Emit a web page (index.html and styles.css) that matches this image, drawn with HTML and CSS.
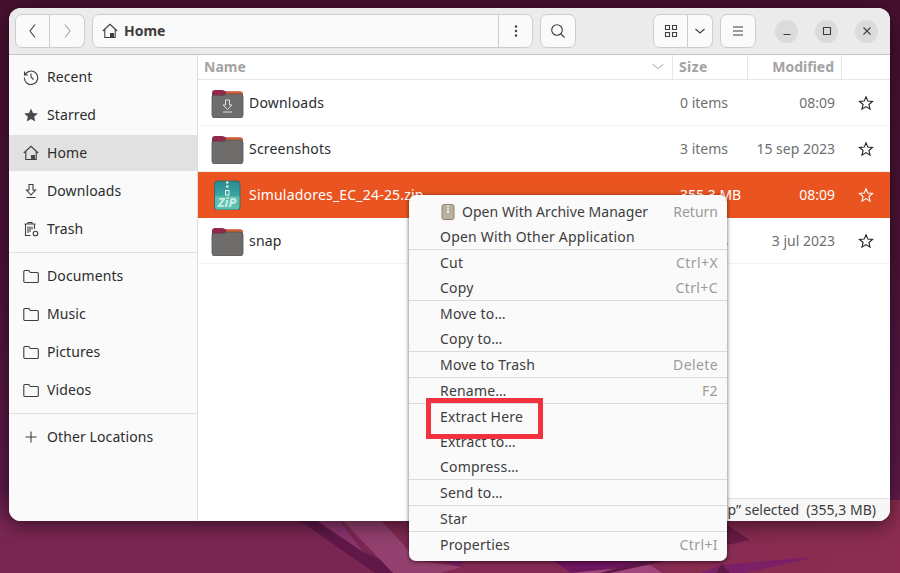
FILE: index.html
```html
<!DOCTYPE html>
<html lang="en">
<head>
<meta charset="utf-8">
<title>Home</title>
<link rel="stylesheet" href="styles.css">
</head>
<body>
<div class="desktop">
  <svg class="wallpaper" viewBox="0 0 900 573" preserveAspectRatio="none" aria-hidden="true">
    <defs>
      <linearGradient id="bg" x1="0" y1="0" x2="0" y2="1">
        <stop offset="0" stop-color="#47102f"/>
        <stop offset=".45" stop-color="#4d1339"/>
        <stop offset=".85" stop-color="#5e1a48"/>
        <stop offset=".92" stop-color="#7a2652"/>
        <stop offset="1" stop-color="#7a2652"/>
      </linearGradient>
      <linearGradient id="low" x1="0" y1="0" x2="1" y2="0">
        <stop offset="0" stop-color="#7f2753"/>
        <stop offset="1" stop-color="#8c2d50"/>
      </linearGradient>
    </defs>
    <rect width="900" height="573" fill="url(#bg)"/>
    <polygon points="298,500 900,500 900,573 410,573" fill="url(#low)"/>
    <polygon points="300,521 316,521 363,552 412,573 375,573" fill="#5f1848"/>
    <polygon points="318,521 340,521 363,552" fill="#8c3470"/>
    <polygon points="343,521 382,521 408,550 430,573 393,573" fill="#94406f"/>
    <polygon points="420,561 462,567 440,573 420,573" fill="#94406f"/>
    <polygon points="440,561 462,561 462,567" fill="#7a1f62"/>
    <polygon points="553,561 640,561 600,573 572,573" fill="#6e1560"/>
    <polygon points="570,573 650,565 662,573" fill="#a0467c"/>
    <polygon points="640,561 665,561 610,573 600,573" fill="#5f1848"/>
    <polygon points="700,573 722,565 815,557 745,573" fill="#7a1f68"/>
    <polygon points="722,564 716,573 730,573" fill="#5f1848"/>
    <polygon points="727,525 750,540 727,545" fill="#6a1b45"/>
  </svg>

  <main class="window">
    <header class="headerbar">
      <div class="btn-group">
        <button class="btn btn-nav"><svg width="16" height="16" viewBox="0 0 16 16"><path d="M10 1.500 5 8l5 6.500" class="ln"/></svg></button>
        <button class="btn btn-nav off"><svg width="16" height="16" viewBox="0 0 16 16"><path d="m6 1.500 5 6.500-5 6.500" class="ln"/></svg></button>
      </div>
      <div class="pathbar">
        <div class="path-main">
          <svg width="16" height="16" viewBox="0 0 16 16"><path d="M.8 8 8 1.300 15.200 8M2.800 6.500V14.500H13.200V6.500" class="ln"/><path d="M8 10h4v4.500H8z" fill="#3d3d3d"/></svg>
          <span class="path-label">Home</span>
        </div>
        <button class="path-more"><svg width="16" height="16" viewBox="0 0 16 16"><circle cx="8" cy="3.500" r="1.200"/><circle cx="8" cy="8" r="1.200"/><circle cx="8" cy="12.500" r="1.200"/></svg></button>
      </div>
      <button class="btn btn-icon"><svg width="16" height="16" viewBox="0 0 16 16"><circle cx="7" cy="7" r="5.300" class="ln"/><path d="m11 11 3.500 3.500" class="ln"/></svg></button>
      <div class="spacer"></div>
      <div class="btn-group">
        <button class="btn btn-view"><svg width="14" height="14" viewBox="0 0 14 14"><path d="M1.500 1.500h4v4h-4zM8.500 1.500h4v4h-4zM1.500 8.500h4v4h-4zM8.500 8.500h4v4h-4z" class="ln"/></svg></button>
        <button class="btn btn-drop"><svg width="12" height="12" viewBox="0 0 12 12"><path d="m1.500 4 4.500 4 4.500-4" class="ln"/></svg></button>
      </div>
      <button class="btn btn-icon btn-menu"><svg width="14" height="14" viewBox="0 0 14 14"><path d="M2 3h10M2 7h10M2 11h10" class="ln"/></svg></button>
      <div class="winctl">
        <span class="wc"><svg width="10" height="10" viewBox="0 0 10 10"><path d="M1.500 8.500h7" class="ln"/></svg></span>
        <span class="wc"><svg width="10" height="10" viewBox="0 0 10 10"><path d="M1.500 1.500h7v7h-7z" class="ln"/></svg></span>
        <span class="wc"><svg width="10" height="10" viewBox="0 0 10 10"><path d="m1.500 1.500 7 7M8.500 1.500l-7 7" class="ln"/></svg></span>
      </div>
    </header>

    <div class="content">
      <nav class="sidebar">
        <div class="side-group">
          <a class="side-item"><svg width="16" height="16" viewBox="0 0 16 16"><path d="M1.500 2.500v3.500H5M1.900 6A6.700 6.700 0 1 1 1.300 8.500M8 4.500V8l2.500 2.500" class="ln"/></svg><span>Recent</span></a>
          <a class="side-item"><svg width="16" height="16" viewBox="0 0 16 16"><path d="m8 1.500 2 4.500 4.800.5-3.600 3.200 1 4.800L8 12.100l-4.200 2.400 1-4.800L1.200 6.500 6 6z" fill="#4a4a4a"/></svg><span>Starred</span></a>
          <a class="side-item active"><svg width="16" height="16" viewBox="0 0 16 16"><path d="M.8 8 8 1.300 15.200 8M2.800 6.500V14.500H13.200V6.500" class="ln"/><path d="M8 10h4v4.500H8z" fill="#4a4a4a"/></svg><span>Home</span></a>
          <a class="side-item"><svg width="16" height="16" viewBox="0 0 16 16"><path d="M6 1.500h4V7h2.500L8 12 3.500 7H6zM3.500 14.500h9" class="ln"/></svg><span>Downloads</span></a>
          <a class="side-item"><svg width="16" height="16" viewBox="0 0 16 16"><path d="M1.500 3h11M5 3V1.500h4V3M2.500 3v11.500h5M11.500 3v5M5 5.500V12M7 5.500V11M9 5.500v3" class="ln"/><circle cx="12.500" cy="12.500" r="2.300" class="ln"/></svg><span>Trash</span></a>
        </div>
        <div class="side-group">
          <a class="side-item"><svg width="16" height="16" viewBox="0 0 16 16"><path d="M.8 3.500a1 1 0 0 1 1-1h4l1.500 2h7a1 1 0 0 1 1 1v8a1 1 0 0 1-1 1h-12.500a1 1 0 0 1-1-1z" class="ln"/></svg><span>Documents</span></a>
          <a class="side-item"><svg width="16" height="16" viewBox="0 0 16 16"><path d="M.8 3.500a1 1 0 0 1 1-1h4l1.500 2h7a1 1 0 0 1 1 1v8a1 1 0 0 1-1 1h-12.500a1 1 0 0 1-1-1z" class="ln"/></svg><span>Music</span></a>
          <a class="side-item"><svg width="16" height="16" viewBox="0 0 16 16"><path d="M.8 3.500a1 1 0 0 1 1-1h4l1.500 2h7a1 1 0 0 1 1 1v8a1 1 0 0 1-1 1h-12.500a1 1 0 0 1-1-1z" class="ln"/></svg><span>Pictures</span></a>
          <a class="side-item"><svg width="16" height="16" viewBox="0 0 16 16"><path d="M.8 3.500a1 1 0 0 1 1-1h4l1.500 2h7a1 1 0 0 1 1 1v8a1 1 0 0 1-1 1h-12.500a1 1 0 0 1-1-1z" class="ln"/></svg><span>Videos</span></a>
        </div>
        <div class="side-group">
          <a class="side-item"><svg width="16" height="16" viewBox="0 0 16 16"><path d="M8 2.500v11M2.500 8h11" class="ln"/></svg><span>Other Locations</span></a>
        </div>
      </nav>

      <section class="files">
        <div class="colhead">
          <div class="col c-name"><span>Name</span><svg width="14" height="14" viewBox="0 0 14 14"><path d="m1.500 5 5.500 4.500L12.500 5" class="ln-soft"/></svg></div>
          <div class="col c-size">Size</div>
          <div class="col c-mod">Modified</div>
          <div class="col c-star"></div>
        </div>

        <div class="row">
          <div class="c-name cell">
            <svg class="ficon" width="33" height="30" viewBox="0 0 33 30"><use href="#folder"/><path d="M14.500 12h4v5h2.500l-4.500 4.500-4.500-4.500h2.500zM12 24h9" fill="none" stroke="#e2e2e2" stroke-width="1"/></svg>
            <span class="fname">Downloads</span>
          </div>
          <div class="c-size cell dim">0 items</div>
          <div class="c-mod cell dim">08:09</div>
          <div class="c-star cell"><svg width="16" height="16" viewBox="0 0 16 16"><use href="#star"/></svg></div>
        </div>
        <div class="row">
          <div class="c-name cell"><svg class="ficon" width="33" height="30" viewBox="0 0 33 30"><use href="#folder"/></svg><span class="fname">Screenshots</span></div>
          <div class="c-size cell dim">3 items</div>
          <div class="c-mod cell dim">15 sep 2023</div>
          <div class="c-star cell"><svg width="16" height="16" viewBox="0 0 16 16"><use href="#star"/></svg></div>
        </div>
        <div class="row selected">
          <div class="c-name cell">
            <svg class="ficon" width="33" height="30" viewBox="0 0 33 30">
              <defs><linearGradient id="zipg" x1="0" y1="0" x2="0" y2="1"><stop offset="0" stop-color="#2a8a90"/><stop offset=".5" stop-color="#3ba5a0"/><stop offset=".55" stop-color="#5cc0ae"/><stop offset="1" stop-color="#5cc0ae"/></linearGradient></defs>
              <rect x="3.500" y="1" width="25.500" height="29" rx="3" fill="url(#zipg)" stroke="#38686b"/>
              <path d="M15 1.500h2.500v2H15zM15 5.500h2.500v2H15z" fill="#e9f5f4"/>
              <rect x="14.500" y="10.500" width="3.500" height="4.500" fill="none" stroke="#e9f5f4"/>
              <text x="16" y="27" class="ziptext" text-anchor="middle">ZiP</text>
            </svg>
            <span class="fname">Simuladores_EC_24-25.zip</span>
          </div>
          <div class="c-size cell">355,3 MB</div>
          <div class="c-mod cell">08:09</div>
          <div class="c-star cell"><svg width="16" height="16" viewBox="0 0 16 16"><use href="#star-w"/></svg></div>
        </div>
        <div class="row">
          <div class="c-name cell"><svg class="ficon" width="33" height="30" viewBox="0 0 33 30"><use href="#folder"/></svg><span class="fname">snap</span></div>
          <div class="c-size cell dim">2 items</div>
          <div class="c-mod cell dim">3 jul 2023</div>
          <div class="c-star cell"><svg width="16" height="16" viewBox="0 0 16 16"><use href="#star"/></svg></div>
        </div>

        <div class="status">“Simuladores_EC_24-25.zip” selected&nbsp; (355,3 MB)</div>
      </section>
    </div>
  </main>

  <div class="menu">
    <div class="mi mi-tight"><svg class="mi-icon" width="16" height="16" viewBox="0 0 16 16"><rect x="2" y=".5" width="12" height="15" rx="2" fill="#b9b19d" stroke="#8d8675"/><path d="M7 1h2v1.500H7zM7 3.500h2V5H7zM7 6h2v3H7z" fill="#ece8dc"/></svg><span class="ml">Open With Archive Manager</span><span class="ms ms-plain">Return</span></div>
    <div class="mi"><span class="ml">Open With Other Application</span></div>
    <hr class="msep">
    <div class="mi"><span class="ml">Cut</span><span class="ms">Ctrl+X</span></div>
    <div class="mi"><span class="ml">Copy</span><span class="ms">Ctrl+C</span></div>
    <hr class="msep">
    <div class="mi"><span class="ml">Move to…</span></div>
    <div class="mi"><span class="ml">Copy to…</span></div>
    <hr class="msep">
    <div class="mi"><span class="ml">Move to Trash</span><span class="ms">Delete</span></div>
    <hr class="msep">
    <div class="mi"><span class="ml">Rename…</span><span class="ms">F2</span></div>
    <hr class="msep">
    <div class="mi"><span class="ml">Extract Here</span></div>
    <div class="mi"><span class="ml">Extract to…</span></div>
    <div class="mi"><span class="ml">Compress…</span></div>
    <hr class="msep">
    <div class="mi"><span class="ml">Send to…</span></div>
    <hr class="msep">
    <div class="mi"><span class="ml">Star</span></div>
    <hr class="msep">
    <div class="mi"><span class="ml">Properties</span><span class="ms">Ctrl+I</span></div>
  </div>

  <div class="highlight"></div>

  <svg class="defs" width="0" height="0" aria-hidden="true">
    <defs>
      <symbol id="folder" viewBox="0 0 33 30">
        <path d="M1 5a3 3 0 0 1 3-3h7c2 0 3 1.500 5 1.500h13a3 3 0 0 1 3 3V12H1z" fill="#8f2a4c"/>
        <path d="M16 3.500h13a3 3 0 0 1 3 2V8H14z" fill="#d9622c"/>
        <path d="M1 9c0-1 .8-1.500 2-1.500h9c2 0 2.500-1.500 5-1.500h12a3 3 0 0 1 3 3v18a3 3 0 0 1-3 3H4a3 3 0 0 1-3-3z" fill="#6f6c6c" stroke="#565454" stroke-width=".8"/>
      </symbol>
      <symbol id="star" viewBox="0 0 16 16"><path d="m8 1.800 1.800 4.300 4.700.4-3.600 3 1.100 4.600L8 11.600l-4 2.500 1.100-4.600-3.600-3 4.700-.4z" fill="none" stroke="#222" stroke-width="1.100"/></symbol>
      <symbol id="star-w" viewBox="0 0 16 16"><path d="m8 1.800 1.800 4.300 4.700.4-3.600 3 1.100 4.600L8 11.600l-4 2.500 1.100-4.600-3.600-3 4.700-.4z" fill="none" stroke="#fff" stroke-width="1.100"/></symbol>
    </defs>
  </svg>
</div>
</body>
</html>
```
FILE: styles.css
```css
* { box-sizing: border-box; }
html, body { margin: 0; padding: 0; }
body {
  font-family: "Noto Sans", "Open Sans", sans-serif;
  font-size: 14px;
  color: #2c2c2c;
  overflow: hidden;
}
svg { display: block; flex: none; }
.ln { fill: none; stroke: #3d3d3d; stroke-width: 1.100; }
.ln-soft { fill: none; stroke: #a8a8a8; stroke-width: 1; }

.desktop { position: relative; width: 900px; height: 573px; overflow: hidden; }
.wallpaper { position: absolute; inset: 0; width: 100%; height: 100%; }
.defs { position: absolute; }

.window {
  position: absolute;
  left: 9px;
  top: 8px;
  width: 881px;
  height: 513px;
  border-radius: 12px;
  overflow: hidden;
  background: #fff;
  box-shadow: 0 4px 20px rgba(0,0,0,.55);
  display: flex;
  flex-direction: column;
}

.headerbar {
  height: 47px;
  flex: none;
  background: #ebebeb;
  border-bottom: 1px solid #c4c4c4;
  display: flex;
  align-items: center;
  padding: 0 12px 0 6px;
}
.spacer { flex: 1; }
button { font: inherit; padding: 0; margin: 0; }
.btn {
  height: 34px;
  background: #fafafa;
  border: 1px solid #cdcdcd;
  border-radius: 7px;
  display: flex;
  align-items: center;
  justify-content: center;
}
.btn-group { display: flex; }
.btn-group .btn:first-child { border-radius: 7px 0 0 7px; }
.btn-group .btn:last-child { border-radius: 0 7px 7px 0; border-left: none; }
.btn-nav { width: 35px; }
.btn-nav.off svg { opacity: .45; }
.btn-icon { width: 36px; margin-left: 7px; }
.btn-view { width: 35px; }
.btn-drop { width: 25px; }
.btn-menu { margin-left: 7px; }
.pathbar {
  width: 441px;
  height: 34px;
  margin-left: 7px;
  display: flex;
  background: #fafafa;
  border: 1px solid #cdcdcd;
  border-radius: 7px;
}
.path-main { flex: 1; display: flex; align-items: center; gap: 6px; padding-left: 9px; }
.path-label { font-weight: 700; color: #3d3d3d; padding-bottom: 2px; }
.path-more { width: 34px; border: none; border-left: 1px solid #cdcdcd; background: none; display: flex; align-items: center; justify-content: center; }
.path-more svg { fill: #3d3d3d; }
.winctl { display: flex; gap: 17px; margin-left: 19px; }
.wc { width: 23px; height: 23px; border-radius: 50%; background: #dbdbdb; display: flex; align-items: center; justify-content: center; }

.content { flex: 1; display: flex; min-height: 0; }

.sidebar {
  width: 189px;
  flex: none;
  background: #fafafa;
  border-right: 1px solid #dcdcdc;
  padding-top: 3px;
}
.side-group { padding-bottom: 4px; border-bottom: 1px solid #e0e0e0; margin-bottom: 4px; }
.side-group:last-child { border-bottom: none; }
.side-item {
  height: 38px;
  display: flex;
  align-items: center;
  gap: 8px;
  padding: 0 0 1px 14px;
  border-block: 1px solid transparent;
  background-clip: padding-box;
  color: #2c2c2c;
  letter-spacing: .1px;
  white-space: nowrap;
}
.side-item.active { background-color: #e1e1e1; }

.files { flex: 1; position: relative; display: flex; flex-direction: column; background: #fff; }
.colhead {
  height: 25px;
  display: flex;
  border-bottom: 1px solid #e6e6e6;
  font-weight: 700;
  color: #a3a3a3;
}
.col { display: flex; align-items: center; border-right: 1px solid #e6e6e6; padding-bottom: 2px; }
.c-name { width: 475px; }
.c-size { width: 75px; }
.c-mod { width: 94px; }
.c-star { flex: 1; }
.col.c-name { justify-content: space-between; padding-left: 6px; padding-right: 7px; }
.col.c-size { padding-left: 6px; letter-spacing: .4px; }
.col.c-mod { justify-content: flex-end; padding-right: 7px; }
.col.c-star { border-right: none; }

.row {
  height: 46px;
  display: flex;
  align-items: center;
  border-bottom: 1px solid #f2f2f2;
}
.cell { display: flex; align-items: center; white-space: nowrap; }
.row .c-name { padding-left: 13px; gap: 5px; }
.row .c-size { padding-left: 7px; }
.row .c-mod { justify-content: flex-end; padding-right: 7px; }
.row .c-star { justify-content: center; }
.fname { letter-spacing: .2px; }
.dim { color: #6f6f6f; }
.row.selected { background: #e95420; color: #fff; border-bottom-color: #e95420; }
.ziptext { font: italic 800 12.500px "Noto Sans", sans-serif; fill: #c6ebe4; }

.status {
  position: absolute;
  right: 0;
  bottom: 0;
  height: 23px;
  padding: 0 14px 2px 8px;
  background: #f7f7f7;
  border: 1px solid #e3e3e3;
  border-width: 1px 0 0 1px;
  display: flex;
  align-items: center;
  white-space: nowrap;
  color: #3d3d3d;
}

.menu {
  position: absolute;
  left: 409px;
  top: 195px;
  width: 318px;
  height: 366px;
  padding: 4px 0;
  background: #fafafa;
  border-radius: 7px;
  box-shadow: 0 1px 4px rgba(0,0,0,.6);
  color: #3d3d3d;
  letter-spacing: .2px;
}
.mi {
  height: 25px;
  display: flex;
  align-items: center;
  padding: 0 9px 0 31px;
  white-space: nowrap;
}
.mi-tight { letter-spacing: .04px; }
.mi-icon { margin-right: 6px; }
.ml { flex: 1; }
.ms { color: #9a9a9a; letter-spacing: .4px; }
.ms-plain { letter-spacing: 0; }
.msep { height: 1px; border: 0; margin: 0; background: #dcdcdc; }

.highlight {
  position: absolute;
  left: 426px;
  top: 398px;
  width: 117px;
  height: 41px;
  border: 5px solid #f2333f;
}
```
